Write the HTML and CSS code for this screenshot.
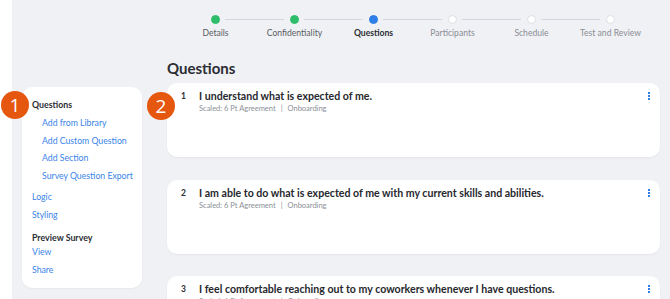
FILE: index.html
```html
<!DOCTYPE html>
<html>
<head>
<meta charset="utf-8">
<link rel="stylesheet" href="styles.css">
</head>
<body>
<div class="page">
  <div class="stepper">
    <div class="step done"><span class="dot"></span><span class="label">Details</span></div>
    <div class="step done"><span class="dot"></span><span class="label">Confidentiality</span></div>
    <div class="step current"><span class="dot"></span><span class="label">Questions</span></div>
    <div class="step"><span class="dot"></span><span class="label">Participants</span></div>
    <div class="step"><span class="dot"></span><span class="label">Schedule</span></div>
    <div class="step last"><span class="dot"></span><span class="label">Test and Review</span></div>
  </div>
  <div class="content">
    <aside class="sidebar">
      <div class="side-title">Questions</div>
      <ul class="sublinks">
        <li><a>Add from Library</a></li>
        <li><a>Add Custom Question</a></li>
        <li><a>Add Section</a></li>
        <li><a>Survey Question Export</a></li>
      </ul>
      <ul class="links">
        <li><a>Logic</a></li>
        <li><a>Styling</a></li>
      </ul>
      <div class="side-title preview">Preview Survey</div>
      <ul class="links tight">
        <li><a>View</a></li>
        <li><a>Share</a></li>
      </ul>
      <span class="badge badge-one">1</span>
    </aside>
    <main class="main">
      <h1 class="heading">Questions</h1>
      <div class="cards">
        <div class="card">
          <span class="num">1</span>
          <div class="body">
            <div class="title">I understand what is expected of me.</div>
            <div class="meta">Scaled: 6 Pt Agreement<span class="sep">|</span>Onboarding</div>
          </div>
          <span class="kebab"><i></i><i></i><i></i></span>
          <span class="badge badge-two">2</span>
        </div>
        <div class="card">
          <span class="num">2</span>
          <div class="body">
            <div class="title">I am able to do what is expected of me with my current skills and abilities.</div>
            <div class="meta">Scaled: 6 Pt Agreement<span class="sep">|</span>Onboarding</div>
          </div>
          <span class="kebab"><i></i><i></i><i></i></span>
        </div>
        <div class="card">
          <span class="num">3</span>
          <div class="body">
            <div class="title">I feel comfortable reaching out to my coworkers whenever I have questions.</div>
            <div class="meta">Scaled: 6 Pt Agreement<span class="sep">|</span>Onboarding</div>
          </div>
          <span class="kebab"><i></i><i></i><i></i></span>
        </div>
      </div>
    </main>
  </div>
</div>
</body>
</html>
```
FILE: styles.css
```css
* { box-sizing: border-box; }
html, body { margin: 0; padding: 0; }
body {
  background: #ffffff;
  font-family: Lato, "Open Sans", Arial, sans-serif;
  color: #2b2d33;
  width: 670px;
  height: 299px;
  overflow: hidden;
}
.page {
  margin-left: 12px;
  background: #f0f1f5;
  height: 299px;
}
.stepper {
  display: flex;
  padding-left: 164px;
  padding-top: 15px;
  height: 60px;
}
.step {
  width: 79px;
  display: flex;
  flex-direction: column;
  align-items: center;
  position: relative;
}
.step::after {
  content: "";
  position: absolute;
  top: 4px;
  left: 49px;
  width: 59px;
  height: 1px;
  background: #d3d6dc;
}
.step.last::after { display: none; }
.dot {
  width: 9px;
  height: 9px;
  border-radius: 50%;
  background: #ffffff;
  border: 1px solid #dcdfe4;
}
.step.done .dot { background: #2ebd6b; border-color: #2ebd6b; }
.step.current .dot { background: #2f7fe8; border-color: #2f7fe8; }
.label {
  margin-top: 4px;
  font-size: 8.6px;
  line-height: 11px;
  color: #8a8d94;
  white-space: nowrap;
}
.step.done .label { color: #5a5d64; }
.step.current .label { color: #2b2d33; font-weight: 700; }
.content {
  display: flex;
  align-items: flex-start;
}
.sidebar {
  position: relative;
  margin-left: 10px;
  margin-top: 27px;
  width: 120px;
  height: 201px;
  flex-shrink: 0;
  background: #ffffff;
  border-radius: 10px;
  padding: 12px 0 0 10px;
  box-shadow: 0 1px 2px rgba(0,0,0,0.04);
  white-space: nowrap;
}
.side-title {
  font-size: 8.8px;
  font-weight: 700;
  color: #2b2d33;
  line-height: 12px;
}
ul { list-style: none; margin: 0; padding: 0; }
a { color: #3a84e8; text-decoration: none; }
.sublinks { padding-left: 10px; margin-top: 3px; }
.sublinks li, .links li {
  font-size: 8.7px;
  line-height: 17.5px;
}
.links { margin-top: 4px; }
.side-title.preview { margin-top: 9px; }
.links.tight { margin-top: -1px; }
.badge {
  position: absolute;
  width: 28px;
  height: 28px;
  border-radius: 50%;
  background: #e5560f;
  color: #ffffff;
  font-size: 19px;
  line-height: 28px;
  text-align: center;
  font-family: "Open Sans", Lato, sans-serif;
}
.badge-one { left: -21px; top: 4px; }
.badge-two { left: -20px; top: 9px; }
.main {
  margin-left: 25px;
  width: 493px;
}
.heading {
  margin: 0;
  margin-top: -2px;
  font-size: 15px;
  font-weight: 700;
  line-height: 20px;
  color: #2b2d33;
}
.cards {
  margin-top: 5px;
  display: flex;
  flex-direction: column;
  gap: 22.5px;
}
.card {
  position: relative;
  background: #ffffff;
  border-radius: 10px;
  height: 74px;
  display: flex;
  align-items: flex-start;
  padding: 6px 10px 0 14px;
  box-shadow: 0 1px 2px rgba(0,0,0,0.05);
  flex-shrink: 0;
}
.num {
  width: 18px;
  font-size: 8.5px;
  font-weight: 700;
  line-height: 14px;
  color: #2b2d33;
}
.body { flex: 1; }
.title {
  font-size: 10.6px;
  font-weight: 700;
  line-height: 14px;
  color: #26282d;
}
.meta {
  font-size: 7.5px;
  color: #8b8f97;
  line-height: 11px;
}
.sep { margin: 0 5px; }
.kebab {
  display: flex;
  flex-direction: column;
  gap: 1px;
  margin-top: 3px;
  width: 2px;
}
.kebab i {
  display: block;
  width: 2px;
  height: 2px;
  background: #2f7fe8;
}
```
